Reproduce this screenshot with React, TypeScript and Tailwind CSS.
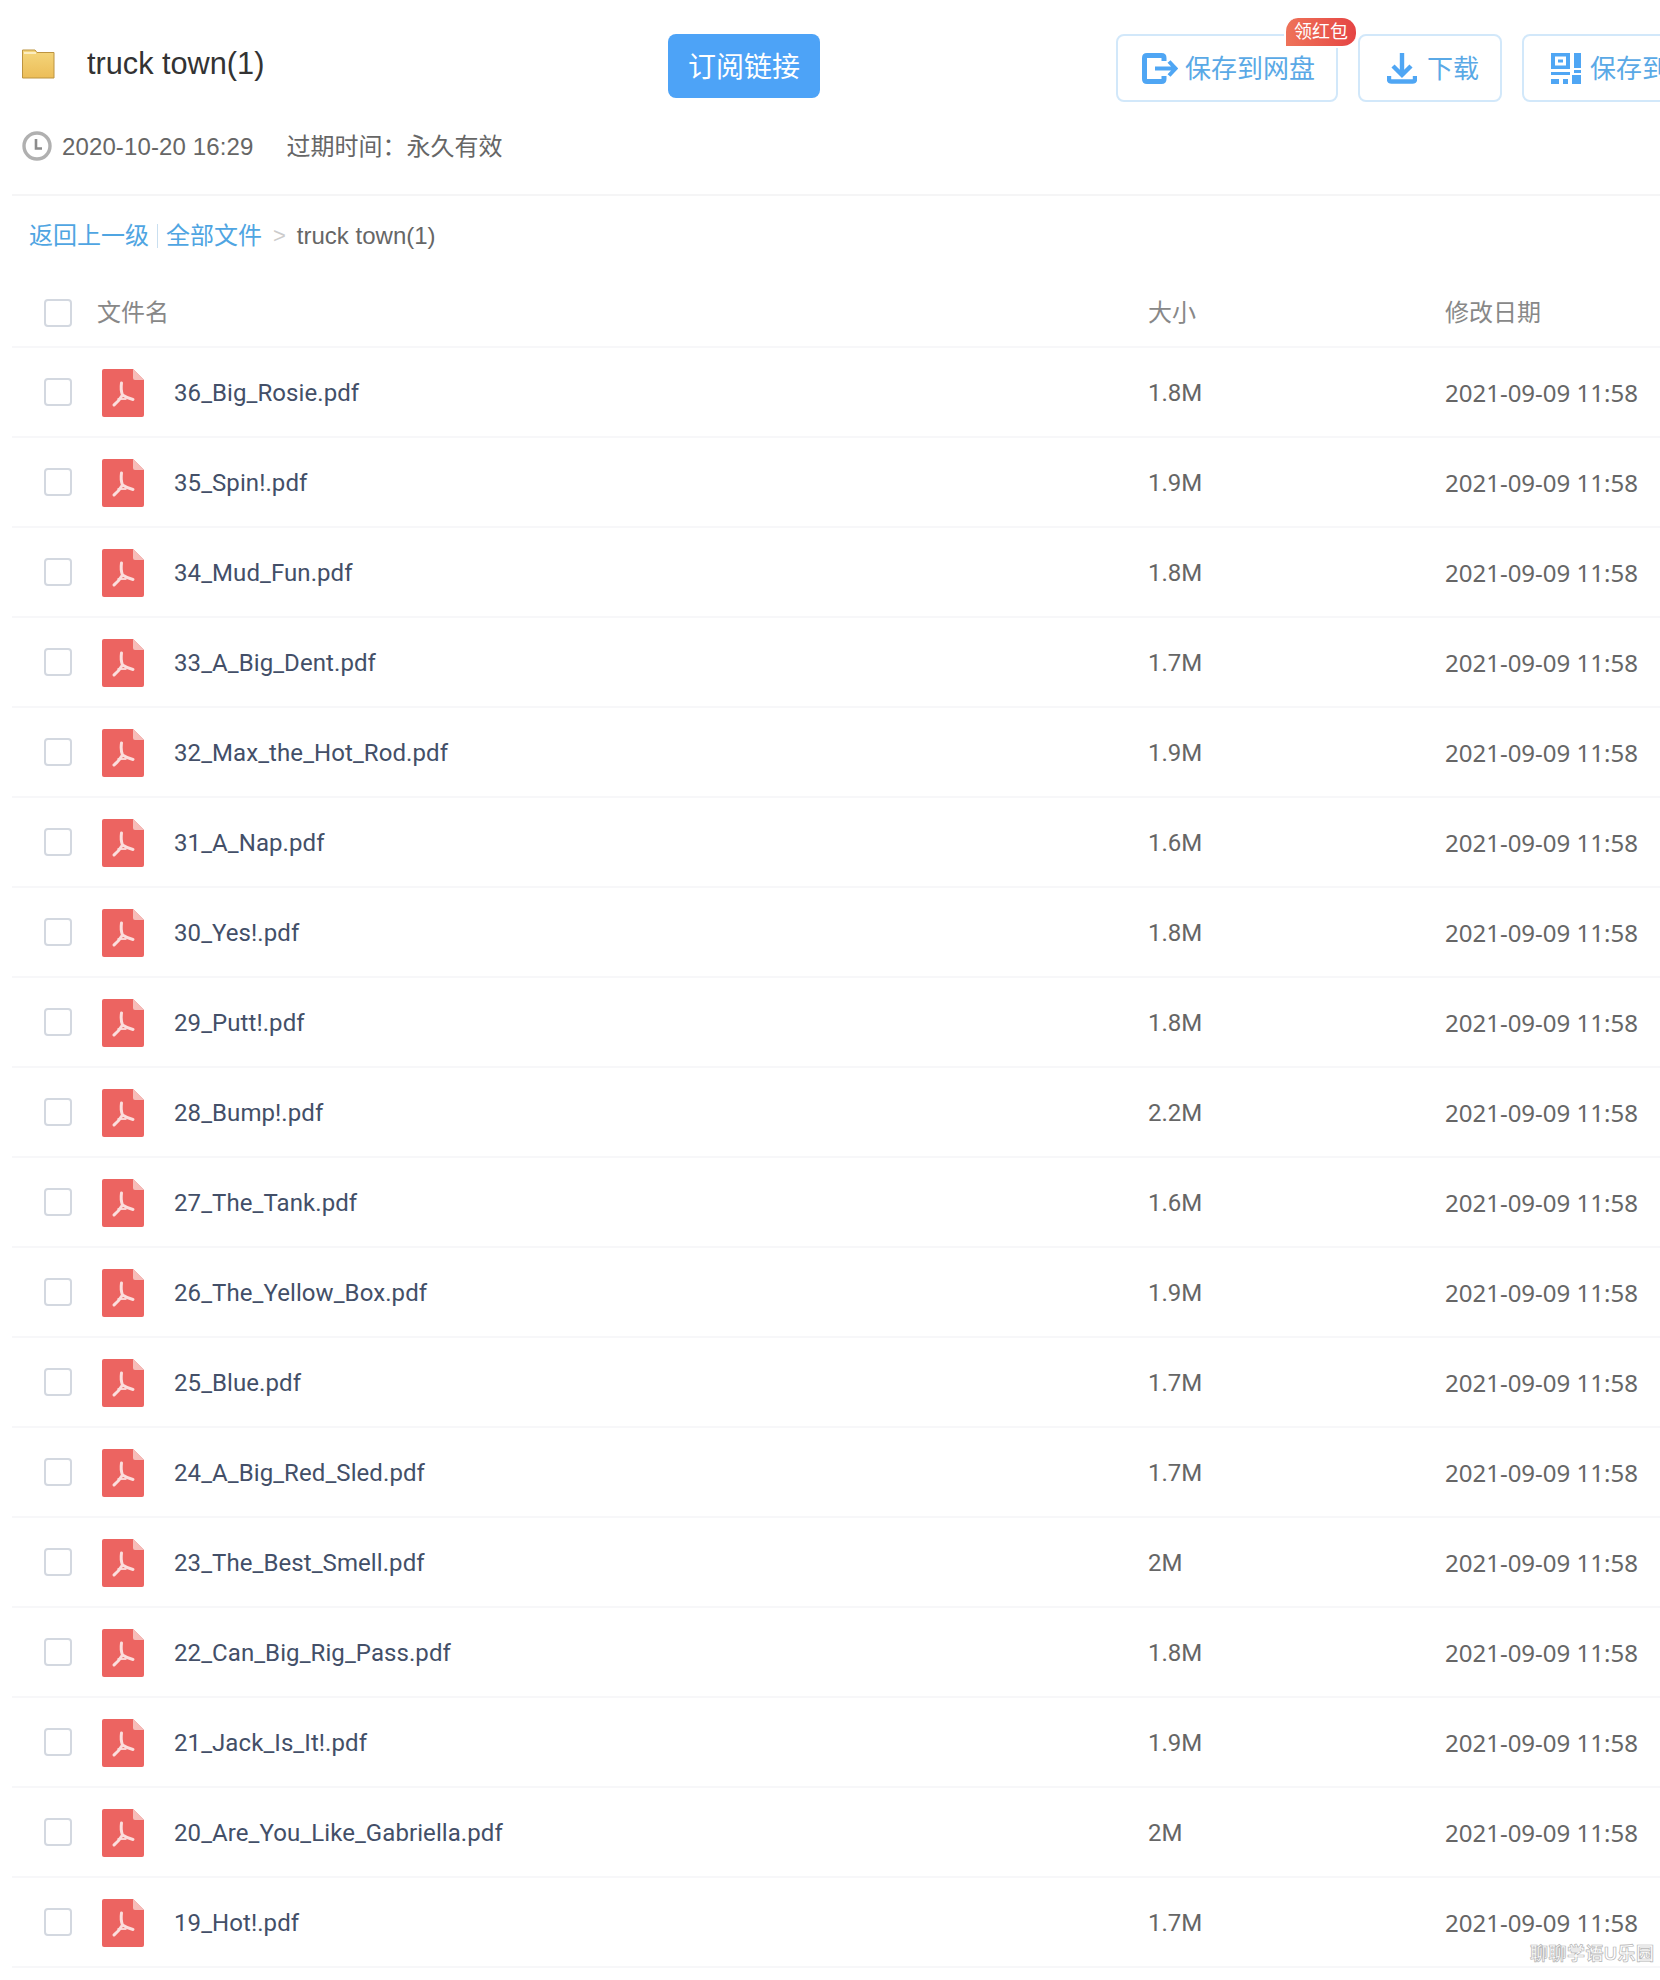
const files = [
  { name: "36_Big_Rosie.pdf", size: "1.8M" },
  { name: "35_Spin!.pdf", size: "1.9M" },
  { name: "34_Mud_Fun.pdf", size: "1.8M" },
  { name: "33_A_Big_Dent.pdf", size: "1.7M" },
  { name: "32_Max_the_Hot_Rod.pdf", size: "1.9M" },
  { name: "31_A_Nap.pdf", size: "1.6M" },
  { name: "30_Yes!.pdf", size: "1.8M" },
  { name: "29_Putt!.pdf", size: "1.8M" },
  { name: "28_Bump!.pdf", size: "2.2M" },
  { name: "27_The_Tank.pdf", size: "1.6M" },
  { name: "26_The_Yellow_Box.pdf", size: "1.9M" },
  { name: "25_Blue.pdf", size: "1.7M" },
  { name: "24_A_Big_Red_Sled.pdf", size: "1.7M" },
  { name: "23_The_Best_Smell.pdf", size: "2M" },
  { name: "22_Can_Big_Rig_Pass.pdf", size: "1.8M" },
  { name: "21_Jack_Is_It!.pdf", size: "1.9M" },
  { name: "20_Are_You_Like_Gabriella.pdf", size: "2M" },
  { name: "19_Hot!.pdf", size: "1.7M" },
];

const FolderIcon = () => (
  <svg width="34" height="31" viewBox="0 0 34 31" className="shrink-0">
    <defs>
      <linearGradient id="folder" x1="0" y1="0" x2="0" y2="1">
        <stop offset="0" stopColor="#f4d67c" />
        <stop offset="1" stopColor="#ecbd58" />
      </linearGradient>
    </defs>
    <path d="M0.5 2 H13 L15 4.5 H32 V30 H0.5 Z" fill="url(#folder)" stroke="#bd9440" />
    <path d="M2 5 H14" stroke="#fff6d8" strokeWidth="1.5" />
  </svg>
);

const ClockIcon = () => (
  <svg width="30" height="30" viewBox="0 0 30 30" className="shrink-0">
    <circle cx="15" cy="15" r="13" fill="none" stroke="#b0b0b0" strokeWidth="3.4" />
    <path d="M14 8 V17.5 H20" fill="none" stroke="#8c8c8c" strokeWidth="2.6" />
  </svg>
);

const SaveIcon = () => (
  <svg width="36" height="31" viewBox="0 0 36 31" className="shrink-0">
    <path
      d="M22 8 V5 Q22 2.5 19.5 2.5 H5 Q2.5 2.5 2.5 5 V26 Q2.5 28.5 5 28.5 H19.5 Q22 28.5 22 26 V23"
      fill="none"
      stroke="#4fa6f4"
      strokeWidth="5"
    />
    <path d="M13 15.5 H32 M27 8.5 L33.5 15.5 L27 22.5" fill="none" stroke="#4fa6f4" strokeWidth="4" />
  </svg>
);

const DownloadIcon = () => (
  <svg width="30" height="31" viewBox="0 0 30 31" className="shrink-0">
    <path d="M15 0 V20 M6 13 L15 22 L24 13" fill="none" stroke="#4fa6f4" strokeWidth="4.4" />
    <path d="M2 23 V26 Q2 28.5 4.5 28.5 H25.5 Q28 28.5 28 26 V23" fill="none" stroke="#4fa6f4" strokeWidth="4.4" />
  </svg>
);

const QrIcon = () => (
  <svg width="30" height="31" viewBox="0 0 30 31" className="shrink-0" fill="#4fa6f4">
    <path fillRule="evenodd" d="M0 0 H19 V16 H0 Z M4 3.5 V12.5 H15 V3.5 Z" />
    <rect x="7" y="6.5" width="5" height="3" />
    <rect x="0" y="19" width="19" height="3" />
    <rect x="23" y="0" width="7" height="15" />
    <rect x="23" y="17" width="7" height="3" />
    <rect x="0" y="26" width="8" height="5" />
    <rect x="12" y="26" width="5" height="5" />
    <rect x="21" y="22" width="9" height="9" />
  </svg>
);

const PdfIcon = () => (
  <svg width="42" height="48" viewBox="0 0 42 48" className="shrink-0">
    <path d="M2 0 H31 L42 11 V46 Q42 48 40 48 H2 Q0 48 0 46 V2 Q0 0 2 0 Z" fill="#ec6461" />
    <path d="M31 0 L42 11 H33 Q31 11 31 9 Z" fill="#f6bcb9" />
    <path
      d="M19.5 14 Q18.5 21 20.5 26 M20.5 26 Q17 32 12 36 M20.5 26 Q25 29 31 30.5"
      fill="none"
      stroke="#fbdedd"
      strokeWidth="3"
      strokeLinecap="round"
    />
    <path d="M15.5 30 H24.5" stroke="#fbdedd" strokeWidth="1.8" />
  </svg>
);

const Checkbox = () => (
  <div className="w-[28px] h-[28px] shrink-0 rounded-[4px] border-2 border-[#d3d8e0] bg-white"></div>
);

const App = () => {
  return (
    <div className="relative w-[1660px] h-[1980px] overflow-hidden bg-white text-[24px] text-[#666] font-['Liberation_Sans','Noto_Sans_CJK_SC',sans-serif]">
      {/* Top bar */}
      <div className="flex h-[102px] pt-[34px] pl-[22px]">
        <div className="flex items-start w-[646px] shrink-0">
          <div className="mt-[14px]"><FolderIcon /></div>
          <h1 className="ml-[31px] text-[30.7px] leading-[60px] font-normal text-[#333]">truck town(1)</h1>
        </div>
        <button className="w-[152px] h-[64px] pt-[3px] shrink-0 rounded-[8px] bg-[#4da3f7] text-white text-[28px]">订阅链接</button>
        <div className="flex gap-[20px] ml-[296px] shrink-0">
          <div className="relative flex items-center w-[222px] h-[68px] pl-[24px] rounded-[8px] border-2 border-[#d2e8fa] text-[26px] text-[#5aa9e6]">
            <SaveIcon />
            <span className="ml-[7px] pt-[2px]">保存到网盘</span>
            <span className="absolute -top-[18px] left-[166px] h-[30px] w-[72px] flex items-center justify-center rounded-t-[14px] rounded-br-[14px] border-b-2 border-l-2 border-white bg-gradient-to-r from-[#ee7259] to-[#e54444] text-white text-[18px]">领红包</span>
          </div>
          <div className="flex items-center w-[144px] h-[68px] pl-[27px] rounded-[8px] border-2 border-[#d2e8fa] text-[26px] text-[#5aa9e6]">
            <DownloadIcon />
            <span className="ml-[10px] pt-[2px]">下载</span>
          </div>
          <div className="flex items-center w-[221px] h-[68px] pl-[27px] shrink-0 rounded-[8px] border-2 border-[#d2e8fa] text-[26px] text-[#5aa9e6]">
            <QrIcon />
            <span className="ml-[9px] pt-[2px] whitespace-nowrap">保存到</span>
          </div>
        </div>
      </div>

      {/* Meta */}
      <div className="flex items-center h-[30px] mt-[29px] pl-[22px] leading-[30px]">
        <ClockIcon />
        <span className="ml-[10px] pt-[2px] tracking-[0.12px]">2020-10-20 16:29</span>
        <span className="ml-[33px] pt-[2px]">过期时间：永久有效</span>
      </div>

      {/* Breadcrumb */}
      <div className="ml-[12px] mt-[33px] border-t-2 border-[#f5f5f6] pt-[26px] pl-[17px] flex items-center h-[56px] leading-[30px]">
        <span className="text-[#4fa5e2]">返回上一级</span>
        <span className="mx-[8px] w-px h-[24px] bg-[#c9dff0]"></span>
        <span className="text-[#4fa5e2]">全部文件</span>
        <span className="ml-[11px] text-[#ccc] text-[22px]">&gt;</span>
        <span className="ml-[11px]">truck town(1)</span>
      </div>

      {/* File table */}
      <div className="ml-[12px] mt-[34px]">
        <div className="flex items-center h-[64px] pb-[4px] pl-[32px] border-b-2 border-[#f7f7f9] text-[#888]">
          <Checkbox />
          <span className="ml-[25px] w-[1051px] shrink-0">文件名</span>
          <span className="w-[297px] shrink-0">大小</span>
          <span>修改日期</span>
        </div>
        {files.map((file) => (
          <div key={file.name} className="flex items-center h-[90px] pl-[32px] border-b-2 border-[#f7f7f9]">
            <Checkbox />
            <div className="ml-[30px] pt-[2px]"><PdfIcon /></div>
            <span className="ml-[30px] w-[974px] pt-[2px] shrink-0 tracking-[0.08px] text-[#434f68] font-['Roboto','Noto_Sans_CJK_SC',sans-serif]">{file.name}</span>
            <span className="w-[297px] pt-[2px] shrink-0 font-['Roboto',sans-serif]">{file.size}</span>
            <span className="pt-[2px] whitespace-nowrap font-['Noto_Sans',sans-serif]">2021-09-09 11:58</span>
          </div>
        ))}
      </div>

      {/* Watermark */}
      <div className="absolute left-[1530px] top-[1941px] text-[18px] leading-[26px] tracking-[0.5px] whitespace-nowrap font-bold text-white [-webkit-text-stroke:0.7px_#b4b4b4]">
        聊聊学语U乐园
      </div>
    </div>
  );
};

export default App;
